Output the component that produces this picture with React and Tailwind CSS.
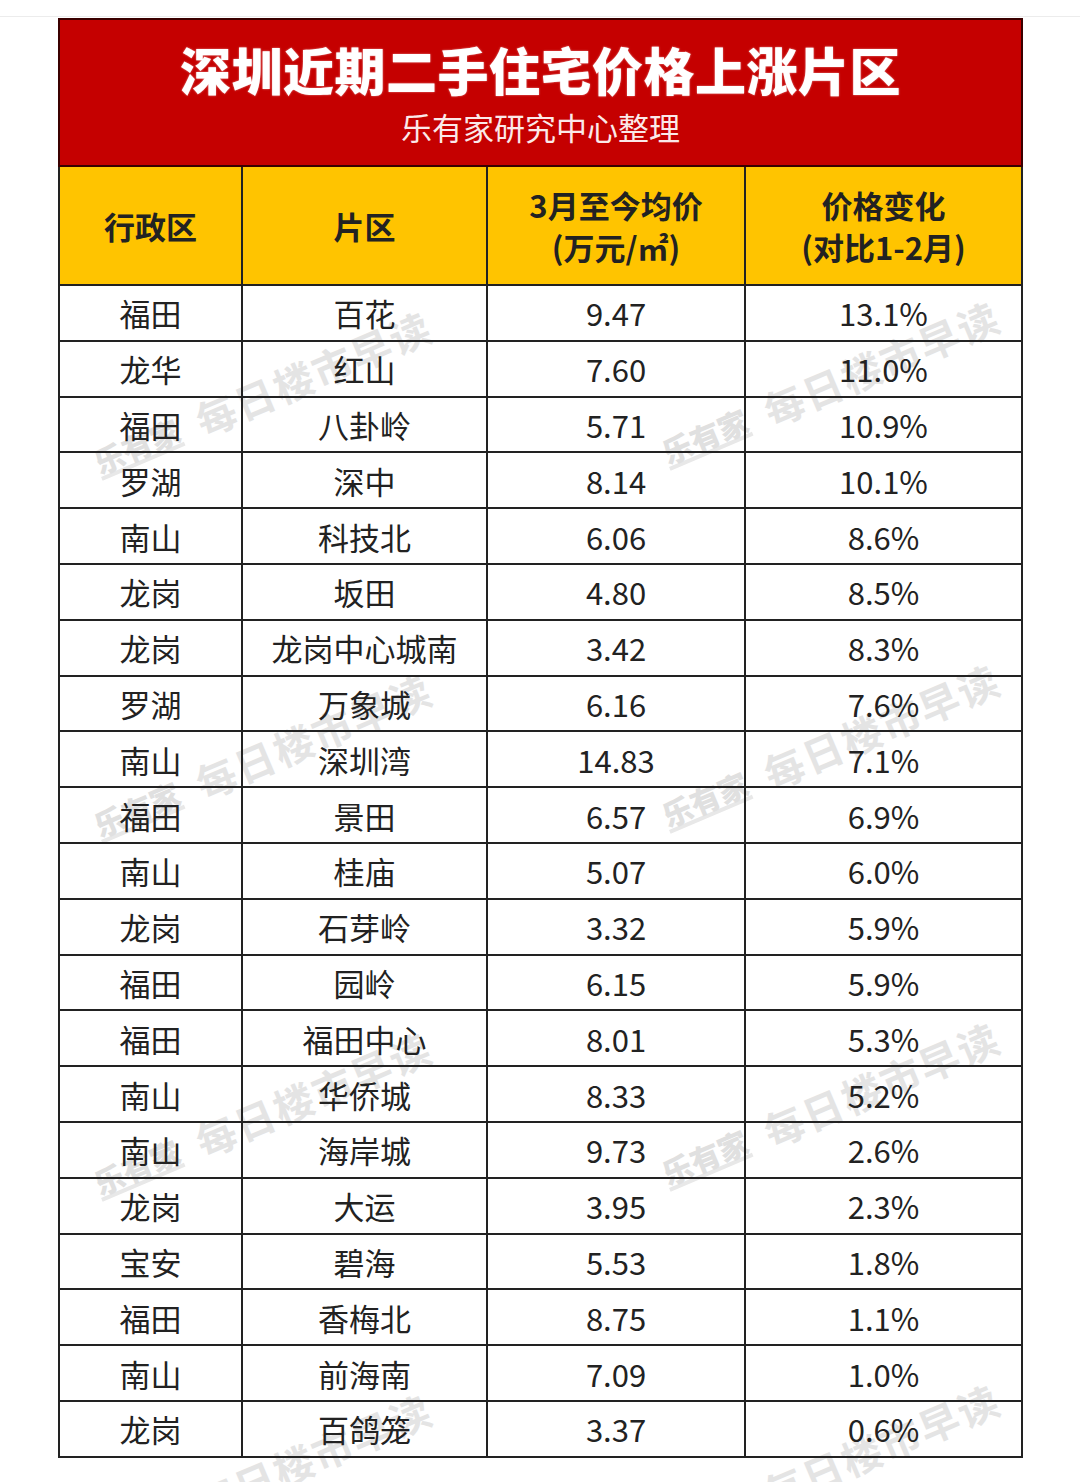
import React from 'react'

const rows = [
  ['福田', '百花', '9.47', '13.1%'],
  ['龙华', '红山', '7.60', '11.0%'],
  ['福田', '八卦岭', '5.71', '10.9%'],
  ['罗湖', '深中', '8.14', '10.1%'],
  ['南山', '科技北', '6.06', '8.6%'],
  ['龙岗', '坂田', '4.80', '8.5%'],
  ['龙岗', '龙岗中心城南', '3.42', '8.3%'],
  ['罗湖', '万象城', '6.16', '7.6%'],
  ['南山', '深圳湾', '14.83', '7.1%'],
  ['福田', '景田', '6.57', '6.9%'],
  ['南山', '桂庙', '5.07', '6.0%'],
  ['龙岗', '石芽岭', '3.32', '5.9%'],
  ['福田', '园岭', '6.15', '5.9%'],
  ['福田', '福田中心', '8.01', '5.3%'],
  ['南山', '华侨城', '8.33', '5.2%'],
  ['南山', '海岸城', '9.73', '2.6%'],
  ['龙岗', '大运', '3.95', '2.3%'],
  ['宝安', '碧海', '5.53', '1.8%'],
  ['福田', '香梅北', '8.75', '1.1%'],
  ['南山', '前海南', '7.09', '1.0%'],
  ['龙岗', '百鸽笼', '3.37', '0.6%'],
]

// watermark sets, top offsets in px
const marks = [325, 688, 1046, 1408]

function Watermark({ top }) {
  return (
    <>
      <div className="absolute left-[96px] flex items-center gap-5 -rotate-[23deg] origin-left pointer-events-none select-none" style={{ top: top + 120 }}>
        <span className="text-[30px] font-black text-[#e0e0e0] border-b-4 border-[#e8e8e8] leading-none">乐有家</span>
        <span className="text-[40px] font-bold text-[#e4e4e4] tracking-[2px] leading-none">每日楼市早读</span>
      </div>
      <div className="absolute left-[664px] flex items-center gap-5 -rotate-[23deg] origin-left pointer-events-none select-none" style={{ top: top + 110 }}>
        <span className="text-[30px] font-black text-[#e0e0e0] border-b-4 border-[#e8e8e8] leading-none">乐有家</span>
        <span className="text-[40px] font-bold text-[#e4e4e4] tracking-[2px] leading-none">每日楼市早读</span>
      </div>
    </>
  )
}

export default function App() {
  return (
    <div className="relative h-[1482px] bg-white overflow-hidden" style={{ fontFamily: '"Noto Sans CJK SC", "Noto Sans", sans-serif' }}>
      {marks.map(t => <Watermark key={t} top={t} />)}
      <div className="relative h-[17px] border-b border-[#ececec]" />
      <table className="relative ml-[58px] mt-[1px] w-[963px] border-collapse table-fixed text-[#222]">
        <colgroup>
          <col className="w-[183px]" />
          <col className="w-[245px]" />
          <col className="w-[258px]" />
          <col className="w-[277px]" />
        </colgroup>
        <thead>
          <tr>
            <th colSpan={4} className="h-[147px] bg-[#c50000] border-2 border-[#3a0000] p-0">
              <div className="text-[51px] font-black text-white leading-none tracking-[0.5px] [text-shadow:0_0_2px_rgba(255,255,255,0.6)]">
                深圳近期二手住宅价格上涨片区
              </div>
              <div className="mt-[16px] text-[31px] font-normal text-[#fbe9e9] leading-none">
                乐有家研究中心整理
              </div>
            </th>
          </tr>
          <tr className="bg-[#ffc400] text-[31px] font-bold leading-[42px]">
            <th className="h-[119px] border-2 border-[#222] p-0">行政区</th>
            <th className="border-2 border-[#222] p-0">片区</th>
            <th className="border-2 border-[#222] p-0">
              3月至今均价<br />(万元/㎡)
            </th>
            <th className="border-2 border-[#222] p-0">
              价格变化<br />(对比1-2月)
            </th>
          </tr>
        </thead>
        <tbody className="text-[31px]">
          {rows.map((r, i) => (
            <tr key={i} className="h-[55.8px]">
              {r.map((c, j) => (
                <td key={j} className="border-2 border-[#222] p-0 text-center leading-none">
                  {c}
                </td>
              ))}
            </tr>
          ))}
        </tbody>
      </table>
    </div>
  )
}
